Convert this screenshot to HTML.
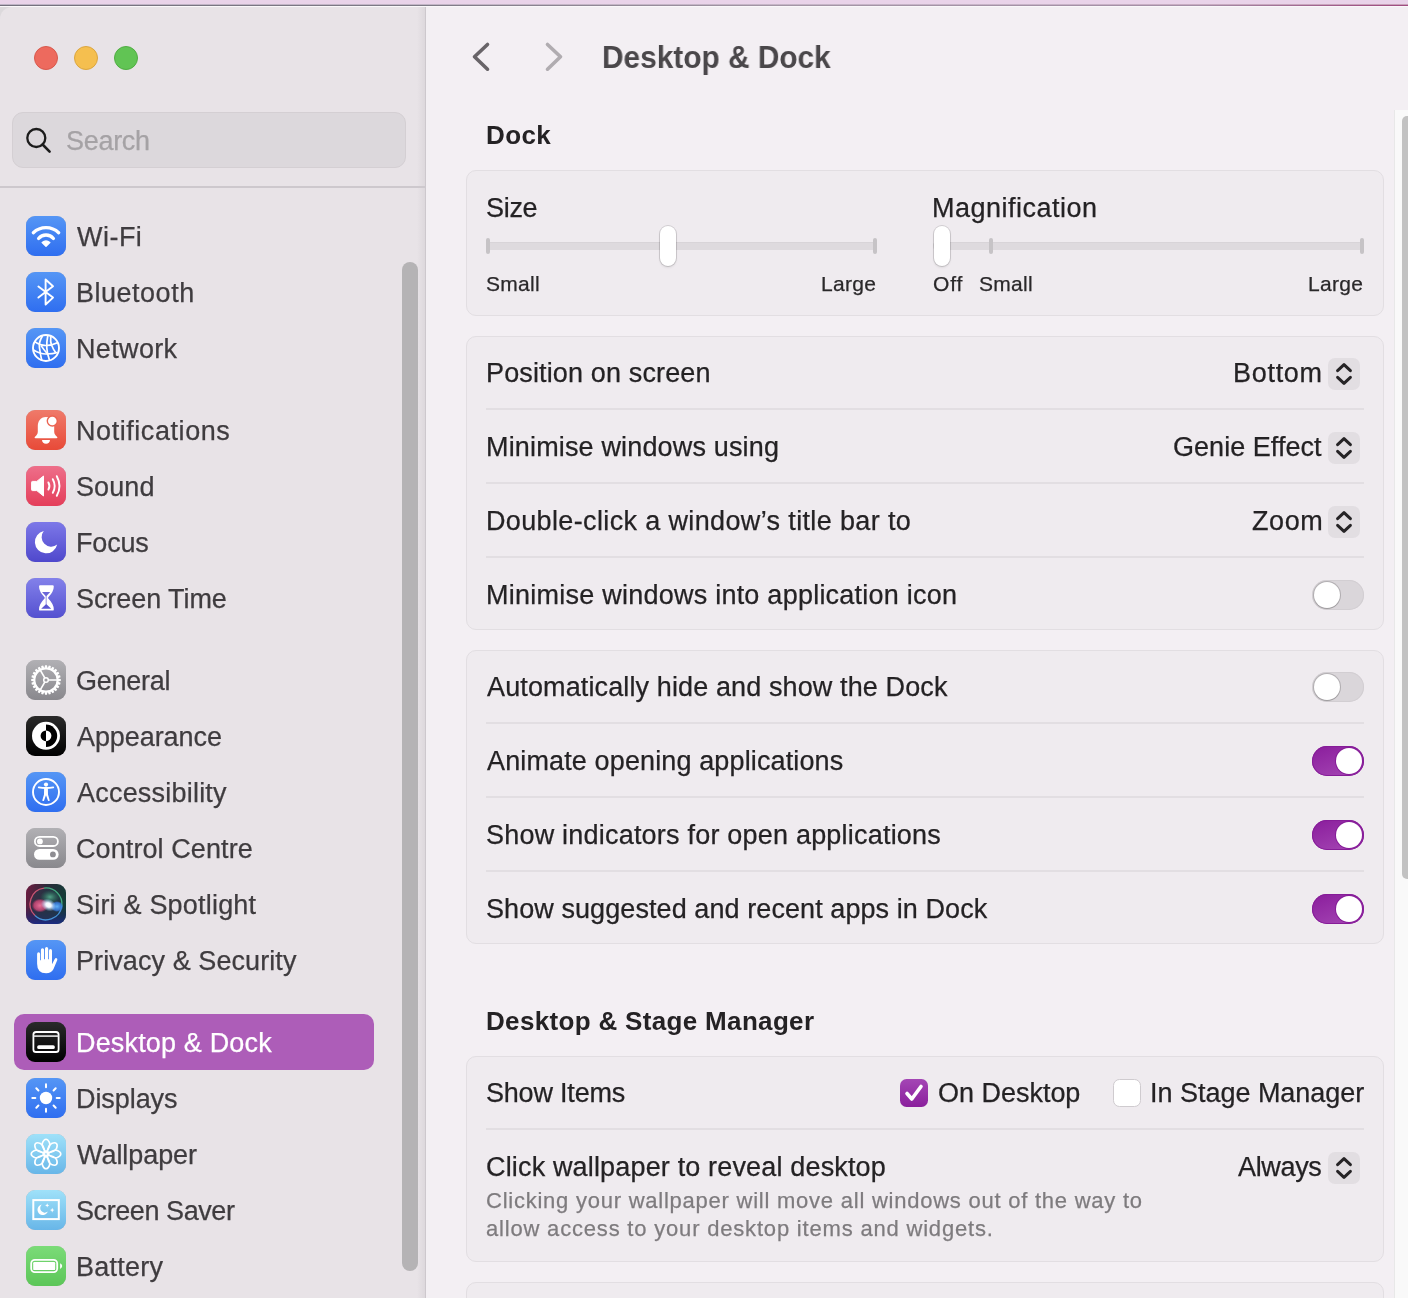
<!DOCTYPE html>
<html><head><meta charset="utf-8">
<style>
*{box-sizing:border-box;margin:0;padding:0}
html,body{width:1408px;height:1298px;overflow:hidden}
body{font-family:"Liberation Sans",sans-serif;background:#f3eff3;position:relative;line-height:1}
.abs{position:absolute}
.t{position:absolute;white-space:nowrap;line-height:1;z-index:3;will-change:transform;-webkit-text-stroke:0.25px currentColor}
#strip{left:0;top:0;width:1408px;height:4px;background:#e9d3e9}
#topline0{left:0;top:4px;width:1408px;height:1px;background:linear-gradient(90deg,#bdb3c4 0%,#c4b6c6 45%,#c8b4c8 75%,#c8a0b8 100%)}
#topline{left:0;top:5px;width:1408px;height:1px;background:linear-gradient(90deg,#75717e 0%,#7e7a86 30%,#a496a6 55%,#a48ea6 85%,#a05888 96%,#a04c80 100%)}
#topline2{left:0;top:6px;width:1408px;height:1px;background:#faf8fa}
#corner{left:0;top:7px;width:14px;height:14px;background:#dcd9dc}
#sidebar{left:0;top:7px;width:425px;height:1291px;background:#e8e3e7;border-top-left-radius:12px}
#sbgrad{left:417px;top:7px;width:8px;height:1291px;background:linear-gradient(90deg,rgba(200,195,200,0),rgba(200,195,200,0.35))}
#sbborder{left:425px;top:7px;width:1px;height:1291px;background:#cdc8cd}
.tl{width:24px;height:24px;border-radius:50%;top:46px}
#search{left:12px;top:112px;width:394px;height:56px;border-radius:11px;background:#dcd8dc;border:1px solid #d4cfd3}
#sep{left:0;top:186px;width:425px;height:2px;background:#cdc8cd}
#sbthumb{left:402px;top:262px;width:16px;height:1009px;border-radius:8px;background:#b5b3b5}
.ic{position:absolute;left:26px;width:40px;height:40px;z-index:2;filter:drop-shadow(0 0.5px 0.6px rgba(0,0,0,0.22))}
.ic svg{display:block;width:40px;height:40px}
#sel{left:14px;top:1014px;width:360px;height:56px;border-radius:10px;background:#ad5db8}
.card{position:absolute;left:466px;width:918px;background:#efebef;border:1px solid #e2dee2;border-radius:10px}
.rsep{position:absolute;left:486px;width:878px;height:2px;background:#e2dee2;z-index:2}
.pop{position:absolute;z-index:2;left:1328px;width:32px;height:32px;border-radius:7px;background:#e2dee2}
.pop svg{position:absolute;left:0;top:0}
.tog{position:absolute;z-index:2;left:1312px;width:52px;height:30px;border-radius:15px}
.tog.off{background:#dad6da;box-shadow:inset 0 0 0 1px #d2ced2}
.tog.on{background:linear-gradient(160deg,#8a1d9c,#a648b5);box-shadow:inset 0 0 0 1px #861c98}
.tog .k{position:absolute;top:2px;width:26px;height:26px;border-radius:50%;background:#fff;box-shadow:0 0 0 1px rgba(0,0,0,0.18),0 1px 1px rgba(0,0,0,0.12)}
.tog.off .k{left:2px}
.tog.on .k{left:24px;box-shadow:0 0 0 1px #861c98}
.track{position:absolute;z-index:2;top:242px;height:8px;background:#dedade;border-radius:4px;box-shadow:inset 0 1px 0 #d8d4d8}
.tick{position:absolute;z-index:2;top:238px;width:4px;height:16px;border-radius:2px;background:#c6c3c6}
.knob{position:absolute;z-index:2;top:226px;width:16px;height:40px;border-radius:8px;background:#fff;box-shadow:0 0 0 1px rgba(0,0,0,0.13),0 1.5px 2.5px rgba(0,0,0,0.10)}
#rtrack{left:1394px;top:110px;width:14px;height:1188px;background:#f9f9f9;border-left:1px solid #e8e8e8;z-index:4}
#rthumb{left:1402px;top:116px;width:10px;height:763px;border-radius:6px;background:#c2c2c2;z-index:5}
</style></head><body>
<div id="strip" class="abs"></div>
<div id="topline0" class="abs"></div>
<div id="topline" class="abs"></div>
<div id="topline2" class="abs"></div>
<div id="corner" class="abs"></div>
<div id="sidebar" class="abs"></div>
<div id="sbgrad" class="abs"></div>
<div id="sbborder" class="abs"></div>
<div class="abs tl" style="left:34px;background:#ed6a5e;border:1px solid #d8594d"></div>
<div class="abs tl" style="left:74px;background:#f5bf4f;border:1px solid #dba640"></div>
<div class="abs tl" style="left:114px;background:#61c454;border:1px solid #50ad43"></div>
<div id="search" class="abs"></div>
<svg class="abs" style="left:20px;top:122px" width="36" height="36" viewBox="0 0 36 36"><circle cx="16.3" cy="16" r="9" fill="none" stroke="#1c1c1c" stroke-width="2.3"/><line x1="22.6" y1="22.5" x2="29.6" y2="29.6" stroke="#1c1c1c" stroke-width="2.6" stroke-linecap="round"/></svg>
<div class="t" style="left:66.4px;top:128px;font-size:27px;letter-spacing:-0.3px;color:#a5a2a5;font-weight:400;">Search</div>
<div id="sep" class="abs"></div>
<div id="sbthumb" class="abs"></div>
<div id="sel" class="abs"></div>
<div class="ic" style="top:216px"><svg viewBox="0 0 40 40"><defs><linearGradient id="g1" x1="0" y1="0" x2="0" y2="1"><stop offset="0" stop-color="#5596f5"/><stop offset="1" stop-color="#2f6ef0"/></linearGradient></defs><rect x="0" y="0" width="40" height="40" rx="9" fill="url(#g1)"/><path d="M7.3 16.7 A18.4 18.4 0 0 1 32.7 16.7" fill="none" stroke="#fff" stroke-width="3.3" stroke-linecap="round"/><path d="M12.6 22.5 A9.6 9.6 0 0 1 27.4 22.5" fill="none" stroke="#fff" stroke-width="3.3" stroke-linecap="round"/><path d="M20 30.3 L16.2 26.6 Q20 23.2 23.8 26.6 Z" fill="#fff" stroke="#fff" stroke-width="1.4" stroke-linejoin="round"/></svg></div>
<div class="t" style="left:76.8px;top:224px;font-size:27px;letter-spacing:0.47px;color:#3f3c3f;font-weight:400;">Wi-Fi</div>
<div class="ic" style="top:272px"><svg viewBox="0 0 40 40"><defs><linearGradient id="g2" x1="0" y1="0" x2="0" y2="1"><stop offset="0" stop-color="#5596f5"/><stop offset="1" stop-color="#2f6ef0"/></linearGradient></defs><rect x="0" y="0" width="40" height="40" rx="9" fill="url(#g2)"/><path d="M12.4 14.5 L27 25.6 L19.6 32.5 L19.6 7.5 L27 14.3 L12.4 25.6" fill="none" stroke="#fff" stroke-width="1.9" stroke-linejoin="round" stroke-linecap="round"/></svg></div>
<div class="t" style="left:75.5px;top:280px;font-size:27px;letter-spacing:0.51px;color:#3f3c3f;font-weight:400;">Bluetooth</div>
<div class="ic" style="top:328px"><svg viewBox="0 0 40 40"><defs><linearGradient id="g3" x1="0" y1="0" x2="0" y2="1"><stop offset="0" stop-color="#5596f5"/><stop offset="1" stop-color="#2f6ef0"/></linearGradient></defs><rect x="0" y="0" width="40" height="40" rx="9" fill="url(#g3)"/><circle cx="20" cy="20" r="13" fill="none" stroke="#fff" stroke-width="1.9"/><path d="M8.5 13.5 Q14 17.5 20 17.5 Q26 17.5 32 14.5" fill="none" stroke="#fff" stroke-width="1.7"/><path d="M7.5 22 Q14 26 20 26 Q27 26 31.5 24.5" fill="none" stroke="#fff" stroke-width="1.7"/><path d="M16.5 8 Q12.5 14 13.5 20 Q14.5 27 15.8 32.5" fill="none" stroke="#fff" stroke-width="1.7"/><path d="M21.8 7.5 Q20.5 14 20.8 20 Q21 25 23.5 32.2" fill="none" stroke="#fff" stroke-width="1.7"/><path d="M24.8 8.5 Q24.2 14 25.5 17 Q27.5 22 30 25" fill="none" stroke="#fff" stroke-width="1.7"/><path d="M15 17.5 Q18 22 21.5 26" fill="none" stroke="#fff" stroke-width="1.5"/></svg></div>
<div class="t" style="left:75.5px;top:336px;font-size:27px;letter-spacing:0.35px;color:#3f3c3f;font-weight:400;">Network</div>
<div class="ic" style="top:410px"><svg viewBox="0 0 40 40"><defs><linearGradient id="g4" x1="0" y1="0" x2="0" y2="1"><stop offset="0" stop-color="#ef7a6a"/><stop offset="1" stop-color="#e84a38"/></linearGradient></defs><rect x="0" y="0" width="40" height="40" rx="9" fill="url(#g4)"/><path d="M20 7 C14.2 7 11.8 11.5 11.8 16.5 L11.8 22 Q11.8 23.8 10.3 25.4 L8.8 27 Q8 28.3 9.6 28.3 L30.4 28.3 Q32 28.3 31.2 27 L29.7 25.4 Q28.2 23.8 28.2 22 L28.2 16.5 C28.2 11.5 25.8 7 20 7 Z" fill="#fff"/><path d="M16 30 L24 30 Q23.6 33.8 20 33.8 Q16.4 33.8 16 30 Z" fill="#fff"/><circle cx="26.3" cy="11" r="5.7" fill="#eb6452"/><circle cx="26.3" cy="11" r="4.3" fill="#fff"/></svg></div>
<div class="t" style="left:75.5px;top:418px;font-size:27px;letter-spacing:0.56px;color:#3f3c3f;font-weight:400;">Notifications</div>
<div class="ic" style="top:466px"><svg viewBox="0 0 40 40"><defs><linearGradient id="g5" x1="0" y1="0" x2="0" y2="1"><stop offset="0" stop-color="#ee6f8a"/><stop offset="1" stop-color="#e43e5a"/></linearGradient></defs><rect x="0" y="0" width="40" height="40" rx="9" fill="url(#g5)"/><path d="M5.6 16.2 Q5.6 15.4 6.4 15.4 L10.8 15.4 L17.5 10 L17.5 30 L10.8 24.6 L6.4 24.6 Q5.6 24.6 5.6 23.8 Z" fill="#fff" stroke="#fff" stroke-width="1" stroke-linejoin="round"/><path d="M22.4 16.4 Q24.5 20 22.4 23.6" fill="none" stroke="#fff" stroke-width="1.9" stroke-linecap="round"/><path d="M26.8 13.2 Q30.6 20 26.8 26.8" fill="none" stroke="#fff" stroke-width="1.9" stroke-linecap="round"/><path d="M30.8 10.2 Q36.2 20 30.8 29.8" fill="none" stroke="#fff" stroke-width="1.9" stroke-linecap="round"/></svg></div>
<div class="t" style="left:76px;top:474px;font-size:27px;letter-spacing:0.1px;color:#3f3c3f;font-weight:400;">Sound</div>
<div class="ic" style="top:522px"><svg viewBox="0 0 40 40"><defs><linearGradient id="g6" x1="0" y1="0" x2="0" y2="1"><stop offset="0" stop-color="#7d78e8"/><stop offset="1" stop-color="#4f48cc"/></linearGradient></defs><rect x="0" y="0" width="40" height="40" rx="9" fill="url(#g6)"/><path d="M17.8 9 A11.3 11.3 0 1 0 31.2 22.6 A9.6 9.6 0 0 1 17.8 9 Z" fill="#fff"/></svg></div>
<div class="t" style="left:75.5px;top:530px;font-size:27px;letter-spacing:-0.17px;color:#3f3c3f;font-weight:400;">Focus</div>
<div class="ic" style="top:578px"><svg viewBox="0 0 40 40"><defs><linearGradient id="g7" x1="0" y1="0" x2="0" y2="1"><stop offset="0" stop-color="#8381ea"/><stop offset="1" stop-color="#5450d0"/></linearGradient></defs><rect x="0" y="0" width="40" height="40" rx="9" fill="url(#g7)"/><path d="M13 8.4 Q13 7.2 14.2 7.2 L26.6 7.2 Q27.8 7.2 27.8 8.4 Q27.8 13.5 22.3 19.2 Q21.7 19.9 22.3 20.6 Q27.8 26.3 27.8 31.4 Q27.8 32.6 26.6 32.6 L14.2 32.6 Q13 32.6 13 31.4 Q13 26.3 18.5 20.6 Q19.1 19.9 18.5 19.2 Q13 13.5 13 8.4 Z" fill="#fff"/><path d="M16 14 L24.2 14 L20.1 18.6 Z" fill="#6a66d8"/><rect x="19.6" y="18" width="1.2" height="8.5" fill="#a9a6e6"/><path d="M15.2 30.8 L25.2 30.8 L20.2 25.9 Z" fill="#5a56d2"/></svg></div>
<div class="t" style="left:76px;top:586px;font-size:27px;letter-spacing:-0.07px;color:#3f3c3f;font-weight:400;">Screen Time</div>
<div class="ic" style="top:660px"><svg viewBox="0 0 40 40"><defs><linearGradient id="g8" x1="0" y1="0" x2="0" y2="1"><stop offset="0" stop-color="#b1b0b4"/><stop offset="1" stop-color="#89888d"/></linearGradient></defs><rect x="0" y="0" width="40" height="40" rx="9" fill="url(#g8)"/><circle cx="20" cy="20" r="11.6" fill="none" stroke="#fff" stroke-width="2"/><path d="M19 5.2 L21 5.2 L21.6 9 L18.4 9 Z" fill="#fff" transform="rotate(0 20 20)"/><path d="M19 5.2 L21 5.2 L21.6 9 L18.4 9 Z" fill="#fff" transform="rotate(15 20 20)"/><path d="M19 5.2 L21 5.2 L21.6 9 L18.4 9 Z" fill="#fff" transform="rotate(30 20 20)"/><path d="M19 5.2 L21 5.2 L21.6 9 L18.4 9 Z" fill="#fff" transform="rotate(45 20 20)"/><path d="M19 5.2 L21 5.2 L21.6 9 L18.4 9 Z" fill="#fff" transform="rotate(60 20 20)"/><path d="M19 5.2 L21 5.2 L21.6 9 L18.4 9 Z" fill="#fff" transform="rotate(75 20 20)"/><path d="M19 5.2 L21 5.2 L21.6 9 L18.4 9 Z" fill="#fff" transform="rotate(90 20 20)"/><path d="M19 5.2 L21 5.2 L21.6 9 L18.4 9 Z" fill="#fff" transform="rotate(105 20 20)"/><path d="M19 5.2 L21 5.2 L21.6 9 L18.4 9 Z" fill="#fff" transform="rotate(120 20 20)"/><path d="M19 5.2 L21 5.2 L21.6 9 L18.4 9 Z" fill="#fff" transform="rotate(135 20 20)"/><path d="M19 5.2 L21 5.2 L21.6 9 L18.4 9 Z" fill="#fff" transform="rotate(150 20 20)"/><path d="M19 5.2 L21 5.2 L21.6 9 L18.4 9 Z" fill="#fff" transform="rotate(165 20 20)"/><path d="M19 5.2 L21 5.2 L21.6 9 L18.4 9 Z" fill="#fff" transform="rotate(180 20 20)"/><path d="M19 5.2 L21 5.2 L21.6 9 L18.4 9 Z" fill="#fff" transform="rotate(195 20 20)"/><path d="M19 5.2 L21 5.2 L21.6 9 L18.4 9 Z" fill="#fff" transform="rotate(210 20 20)"/><path d="M19 5.2 L21 5.2 L21.6 9 L18.4 9 Z" fill="#fff" transform="rotate(225 20 20)"/><path d="M19 5.2 L21 5.2 L21.6 9 L18.4 9 Z" fill="#fff" transform="rotate(240 20 20)"/><path d="M19 5.2 L21 5.2 L21.6 9 L18.4 9 Z" fill="#fff" transform="rotate(255 20 20)"/><path d="M19 5.2 L21 5.2 L21.6 9 L18.4 9 Z" fill="#fff" transform="rotate(270 20 20)"/><path d="M19 5.2 L21 5.2 L21.6 9 L18.4 9 Z" fill="#fff" transform="rotate(285 20 20)"/><path d="M19 5.2 L21 5.2 L21.6 9 L18.4 9 Z" fill="#fff" transform="rotate(300 20 20)"/><path d="M19 5.2 L21 5.2 L21.6 9 L18.4 9 Z" fill="#fff" transform="rotate(315 20 20)"/><path d="M19 5.2 L21 5.2 L21.6 9 L18.4 9 Z" fill="#fff" transform="rotate(330 20 20)"/><path d="M19 5.2 L21 5.2 L21.6 9 L18.4 9 Z" fill="#fff" transform="rotate(345 20 20)"/><circle cx="20" cy="20" r="2.3" fill="none" stroke="#fff" stroke-width="1.5"/><path d="M22.3 20 L31 20 M18.85 18 L14.2 10 M18.85 22 L14.2 30" stroke="#fff" stroke-width="1.5"/></svg></div>
<div class="t" style="left:76px;top:668px;font-size:27px;letter-spacing:-0.27px;color:#3f3c3f;font-weight:400;">General</div>
<div class="ic" style="top:716px"><svg viewBox="0 0 40 40"><defs><linearGradient id="g9" x1="0" y1="0" x2="0" y2="1"><stop offset="0" stop-color="#2a2a2a"/><stop offset="1" stop-color="#000"/></linearGradient></defs><rect x="0" y="0" width="40" height="40" rx="9" fill="url(#g9)"/><circle cx="20" cy="19.8" r="14" fill="#fff"/><path d="M20 8.6 A11.2 11.2 0 0 1 20 31 Z" fill="#000"/><path d="M20 14.4 A5.4 5.4 0 0 0 20 25.2 Z" fill="#000"/><path d="M20 14.4 A5.4 5.4 0 0 1 20 25.2 Z" fill="#fff"/></svg></div>
<div class="t" style="left:76.5px;top:724px;font-size:27px;letter-spacing:-0.08px;color:#3f3c3f;font-weight:400;">Appearance</div>
<div class="ic" style="top:772px"><svg viewBox="0 0 40 40"><defs><linearGradient id="g10" x1="0" y1="0" x2="0" y2="1"><stop offset="0" stop-color="#5596f5"/><stop offset="1" stop-color="#2f6ef0"/></linearGradient></defs><rect x="0" y="0" width="40" height="40" rx="9" fill="url(#g10)"/><circle cx="20" cy="20" r="13" fill="none" stroke="#fff" stroke-width="1.9"/><circle cx="20" cy="12.6" r="2.1" fill="#fff"/><path d="M12.8 15.4 Q20 16.6 27.2 15.4" fill="none" stroke="#fff" stroke-width="1.9" stroke-linecap="round"/><path d="M18.1 16.2 L21.9 16.2 L22 22.5 L23.8 28.7 L22.1 28.9 L20 23.2 L17.9 28.9 L16.2 28.7 L18 22.5 Z" fill="#fff"/></svg></div>
<div class="t" style="left:76.5px;top:780px;font-size:27px;letter-spacing:0.21px;color:#3f3c3f;font-weight:400;">Accessibility</div>
<div class="ic" style="top:828px"><svg viewBox="0 0 40 40"><defs><linearGradient id="g11" x1="0" y1="0" x2="0" y2="1"><stop offset="0" stop-color="#b1b0b4"/><stop offset="1" stop-color="#89888d"/></linearGradient></defs><rect x="0" y="0" width="40" height="40" rx="9" fill="url(#g11)"/><rect x="8.9" y="8.8" width="23" height="9.2" rx="4.6" fill="none" stroke="#fff" stroke-width="1.8"/><circle cx="13.9" cy="13.4" r="2.9" fill="#fff"/><rect x="8" y="21" width="24.6" height="10.8" rx="5.4" fill="#fff"/><circle cx="26.9" cy="26.4" r="2.9" fill="#8e8d92"/></svg></div>
<div class="t" style="left:76px;top:836px;font-size:27px;letter-spacing:0.09px;color:#3f3c3f;font-weight:400;">Control Centre</div>
<div class="ic" style="top:884px"><svg viewBox="0 0 40 40"><defs><linearGradient id="sgb" x1="0" y1="0" x2="1" y2="0.2"><stop offset="0" stop-color="#701a40"/><stop offset="0.5" stop-color="#2c2a3a"/><stop offset="1" stop-color="#153c38"/></linearGradient><linearGradient id="sgb2" x1="0" y1="0" x2="0" y2="1"><stop offset="0.55" stop-color="#1a2060" stop-opacity="0"/><stop offset="1" stop-color="#1c2a90" stop-opacity="0.85"/></linearGradient><radialGradient id="sgc" cx="0.5" cy="0.5" r="0.5"><stop offset="0" stop-color="#fff"/><stop offset="0.35" stop-color="#f0f8ff"/><stop offset="1" stop-color="#a0d0ff" stop-opacity="0"/></radialGradient><radialGradient id="sgp" cx="0.5" cy="0.5" r="0.5"><stop offset="0" stop-color="#e87098"/><stop offset="0.7" stop-color="#d04878" stop-opacity="0.8"/><stop offset="1" stop-color="#c03060" stop-opacity="0"/></radialGradient><radialGradient id="sgbl" cx="0.5" cy="0.5" r="0.5"><stop offset="0" stop-color="#60b0f8"/><stop offset="0.7" stop-color="#3a80e8" stop-opacity="0.8"/><stop offset="1" stop-color="#3a70e0" stop-opacity="0"/></radialGradient><radialGradient id="sgg" cx="0.5" cy="0.5" r="0.5"><stop offset="0" stop-color="#58b090"/><stop offset="1" stop-color="#2a8060" stop-opacity="0"/></radialGradient></defs><rect width="40" height="40" rx="9" fill="url(#sgb)"/><rect width="40" height="40" rx="9" fill="url(#sgb2)"/><circle cx="20" cy="20" r="16" fill="#27384a" opacity="0.55"/><path d="M9 31.5 A16 16 0 0 1 18 4.1" fill="none" stroke="#d85a78" stroke-width="1.3" opacity="0.9"/><path d="M18 4.1 A16 16 0 0 1 35.8 22" fill="none" stroke="#48b888" stroke-width="1.3" opacity="0.9"/><path d="M35.8 22 A16 16 0 0 1 9 31.5" fill="none" stroke="#4a9ee8" stroke-width="1.3" opacity="0.9"/><ellipse cx="24" cy="13" rx="10" ry="7" fill="url(#sgg)" opacity="0.9"/><ellipse cx="14" cy="21.5" rx="8.5" ry="7" fill="url(#sgp)"/><ellipse cx="31" cy="22.5" rx="6.5" ry="5.5" fill="url(#sgbl)"/><ellipse cx="22.5" cy="21" rx="8" ry="6" fill="url(#sgc)" transform="rotate(25 22.5 21)"/></svg></div>
<div class="t" style="left:76px;top:892px;font-size:27px;letter-spacing:0.2px;color:#3f3c3f;font-weight:400;">Siri &amp; Spotlight</div>
<div class="ic" style="top:940px"><svg viewBox="0 0 40 40"><defs><linearGradient id="g12" x1="0" y1="0" x2="0" y2="1"><stop offset="0" stop-color="#5596f5"/><stop offset="1" stop-color="#2f6ef0"/></linearGradient></defs><rect x="0" y="0" width="40" height="40" rx="9" fill="url(#g12)"/><path transform="translate(-1.4,-0.3)" d="M12.5 24 L12.5 14.3 Q12.5 12.6 14 12.6 Q15.5 12.6 15.5 14.3 L15.5 20.5 L16.3 20.5 L16.3 10.3 Q16.3 8.6 17.9 8.6 Q19.5 8.6 19.5 10.3 L19.5 19.5 L20.4 19.5 L20.4 9 Q20.4 7.2 22 7.2 Q23.6 7.2 23.6 9 L23.6 19.5 L24.4 19.5 L24.4 11 Q24.4 9.3 25.9 9.3 Q27.4 9.3 27.4 11 L27.4 24.5 L30 19.5 Q30.9 18 32 18.5 Q33.2 19.2 32.6 20.6 L28.8 29.5 Q26.6 33.5 21.5 33.5 Q12.5 33.5 12.5 24 Z" fill="#fff"/></svg></div>
<div class="t" style="left:75.5px;top:948px;font-size:27px;letter-spacing:0.08px;color:#3f3c3f;font-weight:400;">Privacy &amp; Security</div>
<div class="ic" style="top:1022px"><svg viewBox="0 0 40 40"><defs><linearGradient id="g13" x1="0" y1="0" x2="0" y2="1"><stop offset="0" stop-color="#2a2a2a"/><stop offset="1" stop-color="#000"/></linearGradient></defs><rect x="0" y="0" width="40" height="40" rx="9" fill="url(#g13)"/><rect x="7.4" y="10" width="25.2" height="20" rx="2.6" fill="none" stroke="#fff" stroke-width="1.8"/><line x1="7.4" y1="14.1" x2="32.6" y2="14.1" stroke="#e8e8e8" stroke-width="1.6"/><rect x="11.2" y="23.2" width="17.6" height="3.8" rx="1.6" fill="#fff"/></svg></div>
<div class="t" style="left:75.5px;top:1030px;font-size:27px;letter-spacing:0.16px;color:#fff;font-weight:400;">Desktop &amp; Dock</div>
<div class="ic" style="top:1078px"><svg viewBox="0 0 40 40"><defs><linearGradient id="g14" x1="0" y1="0" x2="0" y2="1"><stop offset="0" stop-color="#5596f5"/><stop offset="1" stop-color="#2f6ef0"/></linearGradient></defs><rect x="0" y="0" width="40" height="40" rx="9" fill="url(#g14)"/><circle cx="20" cy="20" r="6.2" fill="#fff"/><line x1="20" y1="6.3" x2="20" y2="9.3" stroke="#fff" stroke-width="2" stroke-linecap="round" transform="rotate(0 20 20)"/><line x1="20" y1="6.3" x2="20" y2="9.3" stroke="#fff" stroke-width="2" stroke-linecap="round" transform="rotate(45 20 20)"/><line x1="20" y1="6.3" x2="20" y2="9.3" stroke="#fff" stroke-width="2" stroke-linecap="round" transform="rotate(90 20 20)"/><line x1="20" y1="6.3" x2="20" y2="9.3" stroke="#fff" stroke-width="2" stroke-linecap="round" transform="rotate(135 20 20)"/><line x1="20" y1="6.3" x2="20" y2="9.3" stroke="#fff" stroke-width="2" stroke-linecap="round" transform="rotate(180 20 20)"/><line x1="20" y1="6.3" x2="20" y2="9.3" stroke="#fff" stroke-width="2" stroke-linecap="round" transform="rotate(225 20 20)"/><line x1="20" y1="6.3" x2="20" y2="9.3" stroke="#fff" stroke-width="2" stroke-linecap="round" transform="rotate(270 20 20)"/><line x1="20" y1="6.3" x2="20" y2="9.3" stroke="#fff" stroke-width="2" stroke-linecap="round" transform="rotate(315 20 20)"/></svg></div>
<div class="t" style="left:75.5px;top:1086px;font-size:27px;letter-spacing:-0.07px;color:#3f3c3f;font-weight:400;">Displays</div>
<div class="ic" style="top:1134px"><svg viewBox="0 0 40 40"><defs><linearGradient id="g15" x1="0" y1="0" x2="0" y2="1"><stop offset="0" stop-color="#9fe1f9"/><stop offset="1" stop-color="#68b6e8"/></linearGradient></defs><rect x="0" y="0" width="40" height="40" rx="9" fill="url(#g15)"/><path d="M20 18.5 Q15.2 12.5 16.5 8.6 Q18 5.2 20 5.2 Q22 5.2 23.5 8.6 Q24.8 12.5 20 18.5 Z" fill="none" stroke="#fff" stroke-width="1.6" stroke-linejoin="round" transform="rotate(0 20 20)"/><path d="M20 18.5 Q15.2 12.5 16.5 8.6 Q18 5.2 20 5.2 Q22 5.2 23.5 8.6 Q24.8 12.5 20 18.5 Z" fill="none" stroke="#fff" stroke-width="1.6" stroke-linejoin="round" transform="rotate(45 20 20)"/><path d="M20 18.5 Q15.2 12.5 16.5 8.6 Q18 5.2 20 5.2 Q22 5.2 23.5 8.6 Q24.8 12.5 20 18.5 Z" fill="none" stroke="#fff" stroke-width="1.6" stroke-linejoin="round" transform="rotate(90 20 20)"/><path d="M20 18.5 Q15.2 12.5 16.5 8.6 Q18 5.2 20 5.2 Q22 5.2 23.5 8.6 Q24.8 12.5 20 18.5 Z" fill="none" stroke="#fff" stroke-width="1.6" stroke-linejoin="round" transform="rotate(135 20 20)"/><path d="M20 18.5 Q15.2 12.5 16.5 8.6 Q18 5.2 20 5.2 Q22 5.2 23.5 8.6 Q24.8 12.5 20 18.5 Z" fill="none" stroke="#fff" stroke-width="1.6" stroke-linejoin="round" transform="rotate(180 20 20)"/><path d="M20 18.5 Q15.2 12.5 16.5 8.6 Q18 5.2 20 5.2 Q22 5.2 23.5 8.6 Q24.8 12.5 20 18.5 Z" fill="none" stroke="#fff" stroke-width="1.6" stroke-linejoin="round" transform="rotate(225 20 20)"/><path d="M20 18.5 Q15.2 12.5 16.5 8.6 Q18 5.2 20 5.2 Q22 5.2 23.5 8.6 Q24.8 12.5 20 18.5 Z" fill="none" stroke="#fff" stroke-width="1.6" stroke-linejoin="round" transform="rotate(270 20 20)"/><path d="M20 18.5 Q15.2 12.5 16.5 8.6 Q18 5.2 20 5.2 Q22 5.2 23.5 8.6 Q24.8 12.5 20 18.5 Z" fill="none" stroke="#fff" stroke-width="1.6" stroke-linejoin="round" transform="rotate(315 20 20)"/><circle cx="20" cy="20" r="2.6" fill="none" stroke="#fff" stroke-width="1.6"/></svg></div>
<div class="t" style="left:76.5px;top:1142px;font-size:27px;letter-spacing:-0.06px;color:#3f3c3f;font-weight:400;">Wallpaper</div>
<div class="ic" style="top:1190px"><svg viewBox="0 0 40 40"><defs><linearGradient id="g16" x1="0" y1="0" x2="0" y2="1"><stop offset="0" stop-color="#9fe1f9"/><stop offset="1" stop-color="#68b6e8"/></linearGradient></defs><rect x="0" y="0" width="40" height="40" rx="9" fill="url(#g16)"/><rect x="7.3" y="10.1" width="25.5" height="19" fill="none" stroke="#fff" stroke-width="2"/><path d="M15.8 14.6 A5.3 5.3 0 1 0 21.8 21.6 A4.3 4.3 0 0 1 15.8 14.6 Z" fill="#fff"/><path d="M21.2 13.3 L21.8 14.8 L23.3 15.4 L21.8 16 L21.2 17.5 L20.6 16 L19.1 15.4 L20.6 14.8 Z" fill="#fff"/><path d="M26.2 17.8 L26.9 19.4 L28.5 20.1 L26.9 20.8 L26.2 22.4 L25.5 20.8 L23.9 20.1 L25.5 19.4 Z" fill="#fff"/></svg></div>
<div class="t" style="left:76px;top:1198px;font-size:27px;letter-spacing:-0.42px;color:#3f3c3f;font-weight:400;">Screen Saver</div>
<div class="ic" style="top:1246px"><svg viewBox="0 0 40 40"><defs><linearGradient id="g17" x1="0" y1="0" x2="0" y2="1"><stop offset="0" stop-color="#7bdb78"/><stop offset="1" stop-color="#5cc658"/></linearGradient></defs><rect x="0" y="0" width="40" height="40" rx="9" fill="url(#g17)"/><rect x="5.2" y="13.9" width="26" height="12.3" rx="3.6" fill="none" stroke="#fff" stroke-width="1.8"/><rect x="7.2" y="16" width="22" height="8.1" rx="1.2" fill="#fff"/><path d="M34.1 17.3 Q36.2 18.5 36.2 20.1 Q36.2 21.7 34.1 23 Z" fill="#fff"/></svg></div>
<div class="t" style="left:75.5px;top:1254px;font-size:27px;letter-spacing:0.25px;color:#3f3c3f;font-weight:400;">Battery</div>
<svg class="abs" style="left:460px;top:30px" width="120" height="55" viewBox="0 0 120 55"><polyline points="27.5,14.5 14.5,26.8 27.5,39.2" fill="none" stroke="#686468" stroke-width="3.6" stroke-linecap="round" stroke-linejoin="round"/><polyline points="87.5,14.5 100.5,26.8 87.5,39.2" fill="none" stroke="#b0acb0" stroke-width="3.6" stroke-linecap="round" stroke-linejoin="round"/></svg>
<div class="t" style="left:602px;top:41px;font-size:32px;letter-spacing:0px;color:#4a474a;font-weight:700;-webkit-text-stroke:0;transform:scaleX(0.932);transform-origin:0 0">Desktop &amp; Dock</div>
<div class="t" style="left:485.5px;top:122px;font-size:26px;letter-spacing:0.37px;color:#242224;font-weight:700;-webkit-text-stroke:0;">Dock</div>
<div class="card" style="top:170px;height:146px"></div>
<div class="t" style="left:485.6px;top:195px;font-size:27px;letter-spacing:-0.3px;color:#242224;font-weight:400;">Size</div>
<div class="t" style="left:931.6px;top:195px;font-size:27px;letter-spacing:0.5px;color:#242224;font-weight:400;">Magnification</div>
<div class="track" style="left:486px;width:391px"></div><div class="tick" style="left:486px"></div><div class="tick" style="left:873px"></div><div class="knob" style="left:660px"></div>
<div class="track" style="left:933px;width:431px"></div><div class="tick" style="left:989px"></div><div class="tick" style="left:1360px"></div><div class="knob" style="left:934px"></div>
<div class="t" style="left:485.6px;top:273px;font-size:21px;letter-spacing:0.28px;color:#2a282a;font-weight:400;">Small</div>
<div class="t" style="left:821px;top:273px;font-size:21px;letter-spacing:0.32px;color:#2a282a;font-weight:400;">Large</div>
<div class="t" style="left:932.6px;top:273px;font-size:21px;letter-spacing:0.8px;color:#2a282a;font-weight:400;">Off</div>
<div class="t" style="left:979.3px;top:273px;font-size:21px;letter-spacing:0.28px;color:#2a282a;font-weight:400;">Small</div>
<div class="t" style="left:1308px;top:273px;font-size:21px;letter-spacing:0.32px;color:#2a282a;font-weight:400;">Large</div>
<div class="card" style="top:336px;height:294px"></div>
<div class="t" style="left:486.2px;top:360px;font-size:27px;letter-spacing:0.14px;color:#242224;font-weight:400;">Position on screen</div>
<div class="rsep" style="top:408px"></div>
<div class="t" style="left:486px;top:434px;font-size:27px;letter-spacing:0.16px;color:#242224;font-weight:400;">Minimise windows using</div>
<div class="rsep" style="top:482px"></div>
<div class="t" style="left:485.5px;top:508px;font-size:27px;letter-spacing:0.36px;color:#242224;font-weight:400;">Double-click a window’s title bar to</div>
<div class="rsep" style="top:556px"></div>
<div class="t" style="left:485.6px;top:582px;font-size:27px;letter-spacing:0.24px;color:#242224;font-weight:400;">Minimise windows into application icon</div>
<div class="t" style="left:1233px;top:360px;font-size:27px;letter-spacing:0.7px;color:#242224;font-weight:400;">Bottom</div>
<div class="t" style="left:1172.6px;top:434px;font-size:27px;letter-spacing:0.04px;color:#242224;font-weight:400;">Genie Effect</div>
<div class="t" style="left:1251.9px;top:508px;font-size:27px;letter-spacing:0.6px;color:#242224;font-weight:400;">Zoom</div>
<div class="pop" style="top:358px"><svg width="32" height="32" viewBox="0 0 32 32"><polyline points="9.6,12.6 16,6.6 22.4,12.6" fill="none" stroke="#262426" stroke-width="3" stroke-linecap="round" stroke-linejoin="round"/><polyline points="9.6,19.4 16,25.4 22.4,19.4" fill="none" stroke="#262426" stroke-width="3" stroke-linecap="round" stroke-linejoin="round"/></svg></div>
<div class="pop" style="top:432px"><svg width="32" height="32" viewBox="0 0 32 32"><polyline points="9.6,12.6 16,6.6 22.4,12.6" fill="none" stroke="#262426" stroke-width="3" stroke-linecap="round" stroke-linejoin="round"/><polyline points="9.6,19.4 16,25.4 22.4,19.4" fill="none" stroke="#262426" stroke-width="3" stroke-linecap="round" stroke-linejoin="round"/></svg></div>
<div class="pop" style="top:506px"><svg width="32" height="32" viewBox="0 0 32 32"><polyline points="9.6,12.6 16,6.6 22.4,12.6" fill="none" stroke="#262426" stroke-width="3" stroke-linecap="round" stroke-linejoin="round"/><polyline points="9.6,19.4 16,25.4 22.4,19.4" fill="none" stroke="#262426" stroke-width="3" stroke-linecap="round" stroke-linejoin="round"/></svg></div>
<div class="tog off" style="top:580px"><div class="k"></div></div>
<div class="card" style="top:650px;height:294px"></div>
<div class="t" style="left:486.5px;top:674px;font-size:27px;letter-spacing:0.12px;color:#242224;font-weight:400;">Automatically hide and show the Dock</div>
<div class="rsep" style="top:722px"></div>
<div class="t" style="left:486.5px;top:748px;font-size:27px;letter-spacing:0.13px;color:#242224;font-weight:400;">Animate opening applications</div>
<div class="rsep" style="top:796px"></div>
<div class="t" style="left:486px;top:822px;font-size:27px;letter-spacing:0.21px;color:#242224;font-weight:400;">Show indicators for open applications</div>
<div class="rsep" style="top:870px"></div>
<div class="t" style="left:486px;top:896px;font-size:27px;letter-spacing:0.08px;color:#242224;font-weight:400;">Show suggested and recent apps in Dock</div>
<div class="tog off" style="top:672px"><div class="k"></div></div>
<div class="tog on" style="top:746px"><div class="k"></div></div>
<div class="tog on" style="top:820px"><div class="k"></div></div>
<div class="tog on" style="top:894px"><div class="k"></div></div>
<div class="t" style="left:485.7px;top:1008px;font-size:26px;letter-spacing:0.33px;color:#242224;font-weight:700;-webkit-text-stroke:0;">Desktop &amp; Stage Manager</div>
<div class="card" style="top:1056px;height:206px"></div>
<div class="t" style="left:486px;top:1080px;font-size:27px;letter-spacing:-0.2px;color:#242224;font-weight:400;">Show Items</div>
<svg class="abs" style="left:899px;top:1078px" width="30" height="30" viewBox="0 0 30 30"><defs><linearGradient id="cg" x1="0" y1="0" x2="0" y2="1"><stop offset="0" stop-color="#a446b5"/><stop offset="1" stop-color="#8a1f9c"/></linearGradient></defs><rect x="1" y="1" width="28" height="28" rx="6.5" fill="url(#cg)"/><polyline points="8,15.5 12.8,21 22,8.5" fill="none" stroke="#fff" stroke-width="3.6" stroke-linecap="round" stroke-linejoin="round"/></svg>
<svg class="abs" style="left:1112px;top:1078px" width="30" height="30" viewBox="0 0 30 30"><rect x="1.5" y="1.5" width="27" height="27" rx="6" fill="#fff" stroke="#cfcbcf" stroke-width="1"/></svg>
<div class="t" style="left:938px;top:1080px;font-size:27px;letter-spacing:-0.02px;color:#242224;font-weight:400;">On Desktop</div>
<div class="t" style="left:1150px;top:1080px;font-size:27px;letter-spacing:-0.02px;color:#242224;font-weight:400;">In Stage Manager</div>
<div class="rsep" style="top:1128px"></div>
<div class="t" style="left:485.8px;top:1154px;font-size:27px;letter-spacing:0.16px;color:#242224;font-weight:400;">Click wallpaper to reveal desktop</div>
<div class="t" style="left:1237.7px;top:1154px;font-size:27px;letter-spacing:-0.34px;color:#242224;font-weight:400;">Always</div>
<div class="pop" style="top:1152px"><svg width="32" height="32" viewBox="0 0 32 32"><polyline points="9.6,12.6 16,6.6 22.4,12.6" fill="none" stroke="#262426" stroke-width="3" stroke-linecap="round" stroke-linejoin="round"/><polyline points="9.6,19.4 16,25.4 22.4,19.4" fill="none" stroke="#262426" stroke-width="3" stroke-linecap="round" stroke-linejoin="round"/></svg></div>
<div class="t" style="left:485.8px;top:1190px;font-size:22px;letter-spacing:0.76px;color:#7e7b7e;font-weight:400;">Clicking your wallpaper will move all windows out of the way to</div>
<div class="t" style="left:485.8px;top:1218px;font-size:22px;letter-spacing:0.81px;color:#7e7b7e;font-weight:400;">allow access to your desktop items and widgets.</div>
<div class="card" style="top:1282px;height:100px"></div>
<div id="rtrack" class="abs"></div>
<div id="rthumb" class="abs"></div>
</body></html>
